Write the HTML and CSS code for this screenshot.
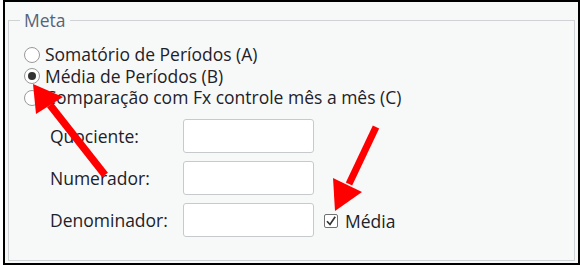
FILE: index.html
```html
<!DOCTYPE html>
<html lang="pt">
<head>
<meta charset="utf-8">
<title>Meta</title>
<link rel="stylesheet" href="styles.css">
</head>
<body>
<div class="frame">
  <fieldset class="group">
    <legend class="group-title">Meta</legend>
    <div class="options">
      <div class="option"><span class="radio"></span><span>Somatório de Períodos (A)</span></div>
      <div class="option"><span class="radio on"></span><span>Média de Períodos (B)</span></div>
      <div class="option"><span class="radio"></span><span>Comparação com Fx controle mês a mês (C)</span></div>
    </div>
    <div class="form">
      <span class="label">Quociente:</span><span class="field"></span><span></span>
      <span class="label">Numerador:</span><span class="field"></span><span></span>
      <span class="label">Denominador:</span><span class="field"></span>
      <span class="check-wrap">
        <span class="check"><svg viewBox="0 0 14 14" width="14" height="14"><path d="M3 7.2 L6 10.5 L11.2 2.8" fill="none" stroke="#333" stroke-width="1.7"/></svg></span>
        <span>Média</span>
      </span>
    </div>
  </fieldset>
  <svg class="arrows" viewBox="0 0 580 265" width="580" height="265">
    <line x1="105" y1="175" x2="50" y2="105" stroke="#ff0000" stroke-width="7.5"/>
    <polygon points="33,84 36,114 63,97" fill="#ff0000"/>
    <line x1="376" y1="127" x2="349" y2="184" stroke="#ff0000" stroke-width="7"/>
    <polygon points="335,211 333,178 362,192" fill="#ff0000"/>
  </svg>
</div>
</body>
</html>
```
FILE: styles.css
```css
html, body {
  margin: 0;
  padding: 0;
  background: #ffffff;
}
body {
  font-family: "Open Sans", "Noto Sans", sans-serif;
  font-size: 17.5px;
  color: #1e2128;
}
.frame {
  position: relative;
  box-sizing: border-box;
  width: 577px;
  height: 265px;
  margin-left: 3px;
  border: 2px solid #000;
  background: #f7f9f9;
  padding: 8px 3px 2px 3px;
  display: flex;
  flex-direction: column;
}
.group {
  flex: 1;
  margin: 0;
  border: 1px solid #cfd3d6;
  padding: 14px 0 0 15px;
  min-width: 0;
}
.group-title {
  margin-left: -4px;
  padding: 0 4px;
  line-height: 20px;
  color: #56647a;
}
.options {
  display: flex;
  flex-direction: column;
  line-height: 21.5px;
}
.option {
  display: flex;
  align-items: center;
  height: 21.5px;
  gap: 5px;
}
.radio {
  box-sizing: border-box;
  width: 16px;
  height: 16px;
  border: 1px solid #999;
  border-radius: 50%;
  background: #fff;
  display: flex;
  align-items: center;
  justify-content: center;
}
.radio.on::after {
  content: "";
  width: 8px;
  height: 8px;
  border-radius: 50%;
  background: #333;
}
.form {
  display: grid;
  grid-template-columns: 133px 131px auto;
  grid-auto-rows: 34px;
  row-gap: 8px;
  margin: 10px 0 0 26px;
  align-items: center;
}
.field {
  box-sizing: border-box;
  height: 34px;
  background: #fff;
  border: 1px solid #c6cacd;
  border-radius: 3px;
}
.check-wrap {
  display: flex;
  align-items: center;
  gap: 7px;
  margin-left: 10px;
  margin-top: 3px;
}
.check {
  box-sizing: border-box;
  width: 14px;
  height: 14px;
  border: 1px solid #707070;
  border-radius: 2px;
  background: #fff;
  display: flex;
}
.check svg {
  margin: -1px;
}
.arrows {
  position: absolute;
  left: -5px;
  top: -2px;
  pointer-events: none;
}
```
